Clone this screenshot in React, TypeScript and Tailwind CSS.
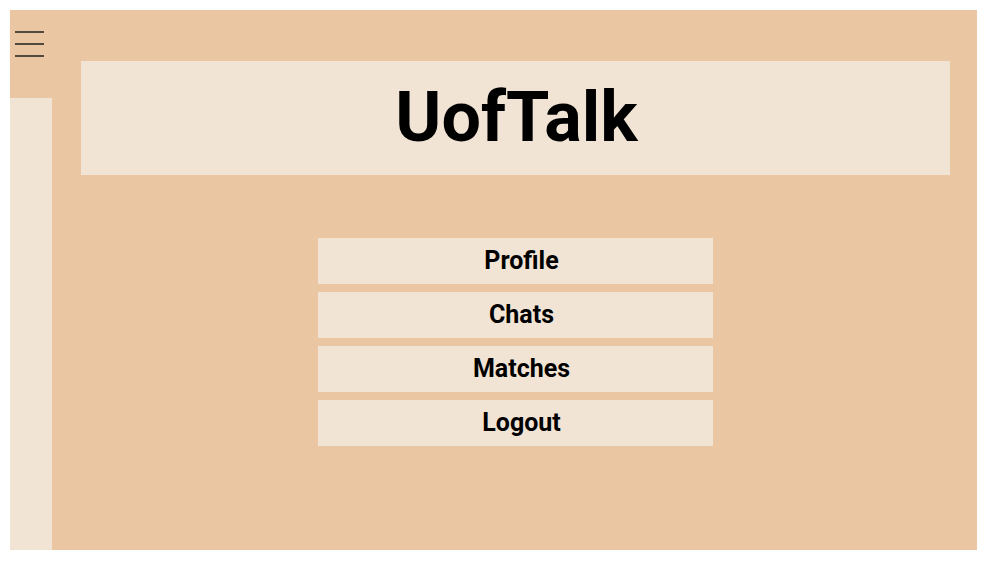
import { useState } from "react";

const menuItems = ["Profile", "Chats", "Matches", "Logout"];

function MenuIcon() {
  return (
    <svg width="30" height="28" viewBox="0 0 30 28" fill="none">
      <line x1="0" y1="3" x2="29" y2="3" stroke="#1f1f1f" strokeWidth="1.5" />
      <line x1="0" y1="15" x2="29" y2="15" stroke="#1f1f1f" strokeWidth="1.5" />
      <line x1="0" y1="27" x2="29" y2="27" stroke="#1f1f1f" strokeWidth="1.5" />
    </svg>
  );
}

function App() {
  const [menuOpen, setMenuOpen] = useState<boolean>(true);

  return (
    <div className="min-h-screen bg-white" style={{ fontFamily: "Roboto, 'Noto Sans', sans-serif" }}>
      <div className="ml-[10px] pt-[10px]">
        <div className="flex w-[967px] h-[540px] bg-[#eac7a2]">
          {/* Left column */}
          <div className="flex flex-col w-[42px] shrink-0">
            <div className="h-[88px] pl-[5px] pt-[19px]">
              <button onClick={() => setMenuOpen(!menuOpen)} className="block cursor-pointer" title="Menu">
                <MenuIcon />
              </button>
            </div>
            {menuOpen && <div className="flex-1 bg-[#f2e4d4]" />}
          </div>

          {/* Main */}
          <div className="flex-1 flex flex-col items-center pt-[51px] pl-[29px] pr-[27px]">
            <div className="w-full h-[114px] bg-[#f2e4d4] flex items-center justify-center">
              <h1 className="text-[70px] font-bold text-black leading-none pb-[2px] pl-[2px]">UofTalk</h1>
            </div>

            <div className="flex flex-col gap-[8px] mt-[63px] w-[395px]">
              {menuItems.map((item) => (
                <button
                  key={item}
                  className="h-[46px] bg-[#f2e4d4] text-black text-[25px] font-bold flex items-center justify-center pl-[12px] pb-[1px] cursor-pointer"
                >
                  {item}
                </button>
              ))}
            </div>
          </div>
        </div>
      </div>
    </div>
  );
}

export default App;
